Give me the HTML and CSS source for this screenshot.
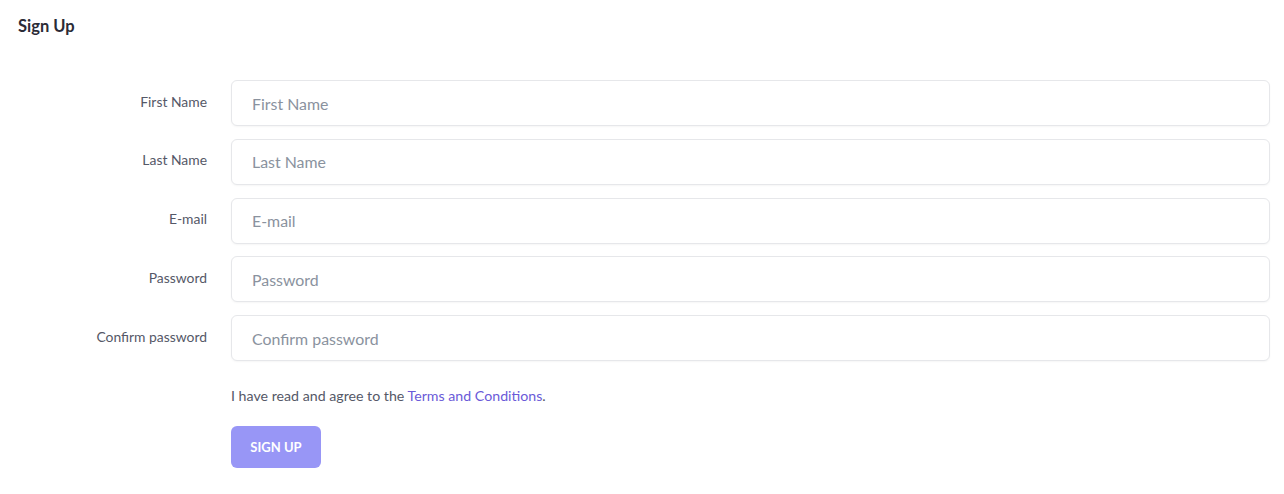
FILE: index.html
```html
<!DOCTYPE html>
<html lang="en">
<head>
<meta charset="utf-8">
<title>Sign Up</title>
<link rel="stylesheet" href="styles.css">
</head>
<body>
<div class="page">
  <h1 class="title">Sign Up</h1>
  <form class="form">
    <div class="row">
      <label class="label" for="fn">First Name</label>
      <input class="input" id="fn" type="text" placeholder="First Name">
    </div>
    <div class="row">
      <label class="label" for="ln">Last Name</label>
      <input class="input" id="ln" type="text" placeholder="Last Name">
    </div>
    <div class="row">
      <label class="label" for="em">E-mail</label>
      <input class="input" id="em" type="email" placeholder="E-mail">
    </div>
    <div class="row">
      <label class="label" for="pw">Password</label>
      <input class="input" id="pw" type="password" placeholder="Password">
    </div>
    <div class="row">
      <label class="label" for="cpw">Confirm password</label>
      <input class="input" id="cpw" type="password" placeholder="Confirm password">
    </div>
    <div class="row row-plain">
      <span></span>
      <div class="after">
        <p class="terms">I have read and agree to the <a class="link" href="#">Terms and Conditions</a>.</p>
        <button class="btn" type="button">SIGN UP</button>
      </div>
    </div>
  </form>
</div>
</body>
</html>
```

FILE: styles.css
```css
* { box-sizing: border-box; }
html, body { margin: 0; padding: 0; background: #fff; }
body {
  font-family: Lato, "Open Sans", "Liberation Sans", sans-serif;
  color: #4b4b5a;
}
.page {
  padding: 13px 14px 0 18px;
}
.title {
  margin: 0;
  font-size: 16.5px;
  font-weight: 700;
  color: #2b2b36;
  line-height: 26px;
}
.form {
  margin-top: 41px;
  display: flex;
  flex-direction: column;
  gap: 12.75px;
}
.row {
  display: grid;
  grid-template-columns: 189px 1fr;
  column-gap: 24px;
  align-items: center;
}
.label {
  text-align: right;
  font-size: 13.9px;
  color: #555867;
  line-height: 18px;
  margin-top: -3px;
}
.input {
  height: 46px;
  width: 100%;
  border: 1px solid #e6e7ea;
  border-radius: 6px;
  padding: 0 20px;
  font-family: inherit;
  font-size: 15.9px;
  color: #4b4b5a;
  background: #fff;
  box-shadow: 0 1px 2px rgba(0, 0, 0, 0.04);
  outline: none;
}
.input::placeholder { color: #8a929e; }
.row-plain { align-items: start; }
.after { padding-top: 0; }
.terms {
  margin: 0;
  font-size: 14.2px;
  line-height: 44px;
  color: #555867;
}
.link { color: #6a5ad8; text-decoration: none; }
.btn {
  display: block;
  margin-top: 8px;
  height: 42px;
  width: 90px;
  border: none;
  border-radius: 6px;
  background: #9896f6;
  color: #fff;
  font-family: inherit;
  font-size: 13px;
  font-weight: 700;
  cursor: pointer;
}
```
